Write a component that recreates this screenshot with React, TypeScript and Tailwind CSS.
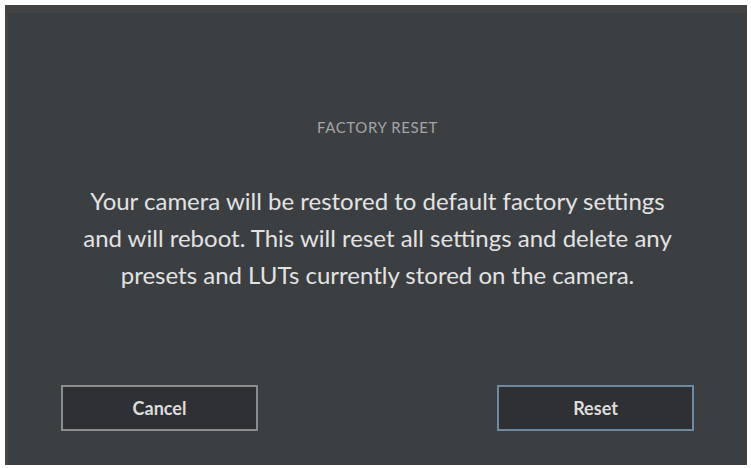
import React from 'react';

export default function App() {
  return (
    <div className="w-[751px] h-[468px] bg-white pt-[5px] pl-[5px]" style={{ fontFamily: 'Lato, "Open Sans", sans-serif' }}>
      <div className="w-[742px] h-[460px] bg-[#3c3f42] border-t-[8px] border-t-[#434343] border-l-[3px] border-l-[#444446] flex flex-col items-center">
        <div className="mt-[104px] text-[15px] leading-[20px] tracking-[0.6px] text-[#a3a5a7]">FACTORY RESET</div>
        <p className="mt-[45px] text-[24px] leading-[37px] text-[#e2e2e2] text-center">
          Your camera will be restored to default factory settings
          <br />
          and will reboot. This will reset all settings and delete any
          <br />
          presets and LUTs currently stored on the camera.
        </p>
        <div className="mt-auto mb-[34px] w-full flex justify-between pl-[53px] pr-[53px]">
          <button className="w-[197px] h-[46px] bg-[#2e3033] border-2 border-[#8a8c8e] text-[18px] font-bold text-[#dcdcdc]">
            Cancel
          </button>
          <button className="w-[197px] h-[46px] bg-[#2e3033] border-2 border-[#6f8aa0] text-[18px] font-bold text-[#dcdcdc]">
            Reset
          </button>
        </div>
      </div>
    </div>
  );
}
